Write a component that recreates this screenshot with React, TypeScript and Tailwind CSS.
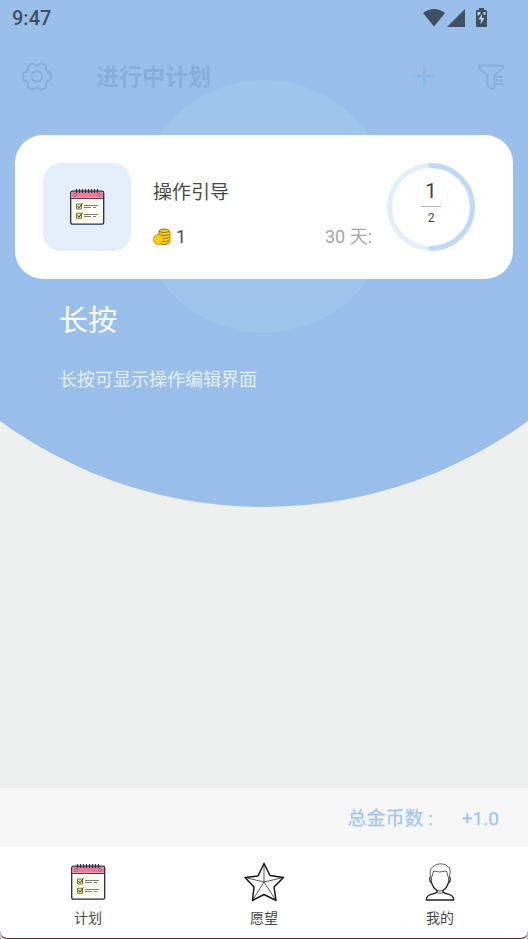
import React from 'react';

function StatusIcons() {
  return (
    <svg width="66" height="20" viewBox="0 0 66 20" fill="#3e5062" aria-hidden="true">
      <path d="M0 5 Q11 -3 22 5 L11 18.500 Z" />
      <path d="M42 1 V19 H24 Z" />
      <path d="M56 0 h5 v2 h2 q1 0 1 1 v15 q0 1 -1 1 h-9 q-1 0 -1 -1 v-15 q0 -1 1 -1 h2 z" />
      <path d="M54.500 4 h3 v1.500 l-2 2 h-1 z M60 4 h2.500 v3 h-1.500 z M59 6 L55.500 11.500 H58 L57.500 16.500 L61.500 10 H59 Z" fill="#b8d0ec" />
    </svg>
  );
}

function GearIcon() {
  return (
    <svg width="30" height="30" viewBox="0 0 30 30" fill="none" stroke="currentColor" strokeWidth="2" strokeLinejoin="round" aria-hidden="true">
      <path d="M9 1.800 Q10.500 1 12 2.200 Q15 5 18 2.200 Q19.500 1 21 1.800 L23.500 3.500 Q24.500 4.500 24 6 Q23.500 9.800 27 10.300 Q28.500 10.800 28.700 12 V17 Q28.500 18.300 27 18.800 Q23.500 19.500 24 23 Q24.500 24.500 23.300 25.500 L21 27.200 Q19.500 28 18 26.800 Q15 24.200 12 26.800 Q10.500 28 9 27.200 L6.500 25.500 Q5.500 24.500 6 23 Q6.500 19.500 3 18.800 Q1.500 18.300 1.300 17 V12 Q1.500 10.800 3 10.300 Q6.500 9.800 6 6 Q5.500 4.500 6.500 3.500 Z" />
      <circle cx="15" cy="14.500" r="5.300" />
    </svg>
  );
}

function PlusIcon() {
  return (
    <svg width="24" height="24" viewBox="0 0 24 24" stroke="currentColor" strokeWidth="3" strokeLinecap="round" aria-hidden="true">
      <path d="M12.500 1.500 V20.500 M3 11 H22" />
    </svg>
  );
}

function FilterIcon() {
  return (
    <svg width="26" height="26" viewBox="0 0 26 26" fill="none" stroke="currentColor" strokeWidth="1.800" strokeLinejoin="round" aria-hidden="true">
      <path d="M1 1.500 H25 V4 L16.500 11.500 V24 L14 25 L9.500 22 V11.500 L1 4 Z" />
      <path d="M18 13 H25 M18 16.500 H25 M18 20 H25" />
    </svg>
  );
}

function PlannerIcon() {
  return (
    <svg width="36" height="38" viewBox="0 0 36 38" aria-hidden="true">
      <rect x="1.700" y="3.200" width="33" height="33" rx="1.800" fill="#fffdf0" stroke="#262c44" strokeWidth="1.300" />
      <path d="M2.400 9.800 V5.500 Q2.400 4 3.900 4 H32.500 Q34 4 34 5.500 V9.800 Z" fill="#f4799b" />
      <path d="M2 10.500 H34" stroke="#5c3b53" strokeWidth="1" />
      <path d="M7.500 1 V5 M10.500 1 V5 M13.500 1 V5 M16.500 1 V5 M19.500 1 V5 M22.500 1 V5 M25.500 1 V5 M28.500 1 V5" stroke="#262c44" strokeWidth="1.200" />
      <ellipse cx="6" cy="7" rx="1.200" ry="1.500" fill="#d9d9d9" stroke="#765264" strokeWidth=".8" />
      <ellipse cx="30" cy="7" rx="1.200" ry="1.500" fill="#d9d9d9" stroke="#765264" strokeWidth=".8" />
      <path d="M7.500 16 H12.500 V21 H7.500 Z M7.500 25.300 H12.500 V30.300 H7.500 Z" fill="#f5ec94" stroke="#77754e" strokeWidth="1" />
      <path d="M8.500 18 L10 19.800 L13.500 15.200 M8.500 27.300 L10 29.100 L13.500 24.500" fill="none" stroke="#3e3d30" strokeWidth="1" />
      <path d="M15 17.500 H29 M15 19.500 H22 M24 19.500 H27 M15 26.500 H29 M15 28.500 H22 M24 28.500 H27" stroke="#6a6f76" strokeWidth=".9" />
    </svg>
  );
}

function CoinsIcon() {
  return (
    <svg width="18" height="18" viewBox="0 0 18 18" aria-hidden="true">
      <path d="M6 3 Q6 1 11 1 Q16 1 16.500 3 V14 Q16 16.500 11 16.500 Q6 16.500 6 14 Z" fill="#f9d006" stroke="#7f6d25" strokeWidth=".9" />
      <path d="M6 3.500 Q11 6 16.500 3.500 M6 6.500 Q11 9 16.500 6.500 M7 10 Q12 11.500 16.500 9.500 M8 13.200 Q13 14.500 16.500 12.500" fill="none" stroke="#7f6d25" strokeWidth=".9" />
      <path d="M17 4 V14" stroke="#f9b406" strokeWidth="1.500" />
      <ellipse cx="5.500" cy="11.500" rx="5" ry="5" fill="#fbcf04" stroke="#b28f1f" strokeWidth=".8" />
    </svg>
  );
}

function StarIcon() {
  return (
    <svg width="42" height="40" viewBox="0 0 42 40" fill="none" stroke="#161616" strokeLinejoin="round" aria-hidden="true">
      <path d="M21 1.500 L27 13.500 L40.500 15.500 L31 25 L33 38.500 L21 32.500 L9.500 38.500 L11 25 L2 15.500 L15 14 Z" strokeWidth="1.500" />
      <path d="M21 1.500 V20 L40.500 15.500 M21 20 L33 38.500 M21 20 L9.500 38.500 M21 20 L2 15.500" strokeWidth=".7" />
    </svg>
  );
}

function PersonIcon() {
  return (
    <svg width="30" height="38" viewBox="0 0 30 38" fill="none" stroke="#202020" strokeLinejoin="round" aria-hidden="true">
      <path d="M5.500 14 Q4.500 14.500 5 18 Q5.500 19.500 6.500 19.500 Q8 25 12 27.500 V29 Q10.500 30.500 6 31.300 Q1.500 32.500 1.200 37 H28.800 Q28.500 32.500 24 31.300 Q19.500 30.500 18 29 V27.500 Q22 25 23.500 19.500 Q24.500 19.500 25 18 Q25.500 14.500 24.500 14" strokeWidth="1.300" />
      <path d="M5.500 14 Q4 6 8 3.500 Q14 -1 21 2 L23 4 L24.500 4.500 Q26 8 24.500 14 M6.500 19 V15 L8.500 8 Q14 10 21.500 8 L23.500 15 V19 M12 27 Q15 29 18 27 M11 29.500 Q15 31 19 29.500" strokeWidth=".7" />
    </svg>
  );
}

function ProgressRing() {
  return (
    <div className="relative size-[88px] shrink-0">
      <svg className="absolute inset-0 size-full" viewBox="0 0 88 88" fill="none" strokeWidth="5" aria-hidden="true">
        <circle cx="44" cy="44" r="41.500" stroke="#e5effa" />
        <path d="M44 2.500 A41.500 41.500 0 0 1 44 85.500" stroke="#c1d9f5" strokeLinecap="round" />
      </svg>
      <div className="flex h-full flex-col items-center pt-4">
        <span className="text-[21px] leading-6 text-[#444]">1</span>
        <span className="my-[3px] h-px w-5 bg-[#b5b5b5]" />
        <span className="text-xs leading-4 text-[#444]">2</span>
      </div>
    </div>
  );
}

const tabs = [
  { label: '计划', icon: <PlannerIcon /> },
  { label: '愿望', icon: <StarIcon /> },
  { label: '我的', icon: <PersonIcon /> },
];

export default function App() {
  return (
    <div className="relative isolate flex min-h-screen flex-col overflow-hidden bg-[#eef0f0] font-[Roboto,'Noto_Sans_CJK_SC',sans-serif]">
      <div className="absolute -top-[389px] left-1/2 -z-10 size-[896px] -translate-x-1/2 rounded-full bg-[#9abfeb]" />
      <div className="absolute top-20 left-1/2 -z-10 size-[253px] -translate-x-1/2 rounded-full bg-[#a0c5ec]" />

      <div className="flex h-9 items-center justify-between pr-9 pl-3">
        <span className="text-xl font-medium text-[#3e5062]">9:47</span>
        <div className="flex w-[69px]"><StatusIcons /></div>
      </div>

      <header className="flex h-[81px] items-center pr-6 pl-[22px] text-[#8aaedb]">
        <button type="button" aria-label="设置"><GearIcon /></button>
        <h1 className="ml-11 flex-1 pt-1 text-[23px] font-bold">进行中计划</h1>
        <button type="button" aria-label="添加" className="mr-[42px] text-[#8dbae9]"><PlusIcon /></button>
        <button type="button" aria-label="筛选"><FilterIcon /></button>
      </header>

      <main className="flex-1">
        <section className="mx-[15px] mt-[18px] flex h-36 items-center rounded-[28px] bg-white pr-[38px] pl-7">
          <div className="flex size-[88px] shrink-0 items-center justify-center rounded-[18px] bg-[#e5effa]">
            <PlannerIcon />
          </div>
          <div className="mr-[15px] ml-[22px] flex h-[88px] flex-1 flex-col justify-between pt-4">
            <h2 className="text-[19px] leading-7 text-[#4a4a4a]">操作引导</h2>
            <div className="flex h-7 items-center text-lg text-[#4a4a4a]">
              <CoinsIcon />
              <span className="ml-[5px]">1</span>
              <span className="ml-auto text-[#a8a8a8]">30 天:</span>
            </div>
          </div>
          <ProgressRing />
        </section>
        <section className="px-[59px] pt-[22px]">
          <h2 className="text-[29px] leading-10 text-white">长按</h2>
          <p className="mt-[25px] text-lg leading-7 text-[#e5effb]">长按可显示操作编辑界面</p>
        </section>
      </main>

      <div className="flex h-[59px] items-center justify-end bg-[#f7f7f7] pt-1 pr-[29px] text-[19px] text-[#a2c5ec] text-shadow-[0_1px_1px_#d5e4f5]">
        <span>总金币数 :</span>
        <span className="ml-[29px]">+1.0</span>
      </div>

      <div className="bg-[#c9bfc5]">
        <nav className="grid h-[92px] grid-cols-3 rounded-b-lg border-b border-[#681a3a] bg-white">
          {tabs.map((tab) => (
            <button key={tab.label} type="button" className="flex flex-col items-center pt-[15px] text-sm leading-5 text-[#4a4a4a]">
              <span className="flex h-10 items-center">{tab.icon}</span>
              <span className="mt-[6px]">{tab.label}</span>
            </button>
          ))}
        </nav>
      </div>
    </div>
  );
}
